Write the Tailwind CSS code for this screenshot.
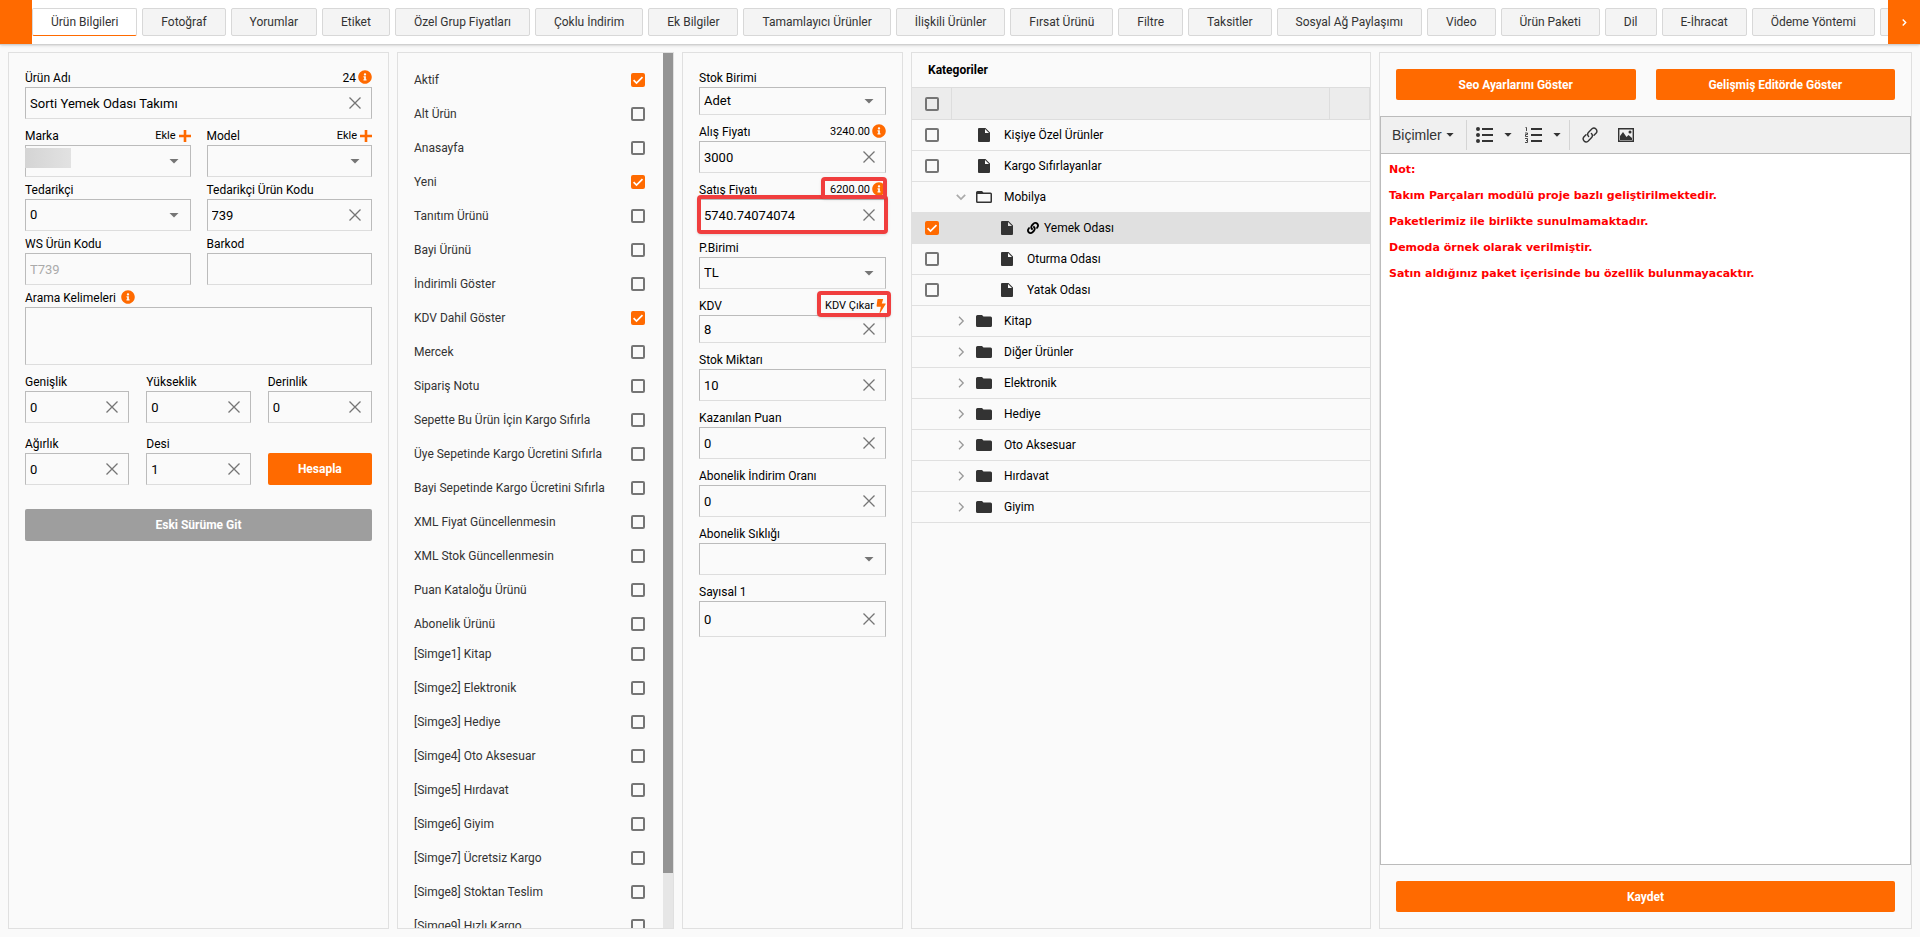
<!DOCTYPE html>
<html lang="tr">
<head>
<meta charset="utf-8">
<title>Ürün Bilgileri</title>
<script src="https://cdn.jsdelivr.net/npm/@tailwindcss/browser@4"></script>
</head>
<body class="flex h-screen flex-col overflow-hidden bg-[#fafafa] font-[Roboto,sans-serif] text-xs text-black">

<svg class="hidden" aria-hidden="true">
  <symbol id="i-x" viewBox="0 0 12 12"><path d="M.5.5l11 11M11.5.5l-11 11" fill="none" stroke="#757575" stroke-width="1.3"/></symbol>
  <symbol id="i-caret" viewBox="0 0 10 5"><path d="M.5 0h9L5 4.6z" fill="currentColor"/></symbol>
  <symbol id="i-plus" viewBox="0 0 12 12"><path d="M6 0v12M0 6h12" fill="none" stroke="#ff6a00" stroke-width="2.6"/></symbol>
  <symbol id="i-info" viewBox="0 0 512 512"><path fill="#ff6a00" d="M256 8C119 8 8 119.100 8 256c0 137 111 248 248 248s248-111 248-248C504 119.100 393 8 256 8zm0 110c23.200 0 42 18.800 42 42s-18.800 42-42 42-42-18.800-42-42 18.800-42 42-42zm56 254c0 6.600-5.400 12-12 12h-88c-6.600 0-12-5.400-12-12v-24c0-6.600 5.400-12 12-12h12v-64h-12c-6.600 0-12-5.400-12-12v-24c0-6.600 5.400-12 12-12h64c6.600 0 12 5.400 12 12v100h12c6.600 0 12 5.400 12 12v24z"/></symbol>
  <symbol id="i-bolt" viewBox="0 0 10 14"><path fill="#ff6a00" d="M2 0h5.200L5.800 4.400H9.300c.4 0 .6.400.4.700L4.300 13.700c-.3.500-.8.200-.7-.2L4.900 7.700H1.200c-.4 0-.6-.3-.6-.6L1.400.6C1.500.2 1.700 0 2 0z"/></symbol>
  <symbol id="i-check" viewBox="0 0 14 14"><path d="M2.600 7.200l2.900 2.900 6-6" fill="none" stroke="currentColor" stroke-width="1.700"/></symbol>
  <symbol id="i-file" viewBox="0 0 12 14"><path fill="#333" fill-rule="evenodd" d="M1 0h6.500L12 4.500V13a1 1 0 0 1-1 1H1a1 1 0 0 1-1-1V1a1 1 0 0 1 1-1zM7 1v4h4z"/></symbol>
  <symbol id="i-folder" viewBox="0 0 16 12"><path fill="#333" d="M1.500 0H6l1.500 1.500h7A1.500 1.500 0 0 1 16 3v7.500a1.500 1.500 0 0 1-1.500 1.500h-13A1.500 1.500 0 0 1 0 10.500v-9A1.500 1.500 0 0 1 1.500 0z"/></symbol>
  <symbol id="i-open" viewBox="0 0 16 12"><path fill="#333" fill-rule="evenodd" d="M1.500 0H6l1.500 1.500h7A1.500 1.500 0 0 1 16 3v7.500a1.500 1.500 0 0 1-1.500 1.500h-13A1.500 1.500 0 0 1 0 10.500v-9A1.500 1.500 0 0 1 1.500 0zM1.500 3v7.500h13V3z"/></symbol>
  <symbol id="i-down" viewBox="0 0 10 10"><path d="M.8 2.800L5 7l4.200-4.200" fill="none" stroke="#aaa" stroke-width="1.700"/></symbol>
  <symbol id="i-right" viewBox="0 0 10 10"><path d="M3 .8L7.200 5 3 9.200" fill="none" stroke="#999" stroke-width="1.300"/></symbol>
  <symbol id="i-link" viewBox="0 0 512 512"><path fill="currentColor" d="M326.612 185.391c59.747 59.809 58.927 155.698.360 214.590-.110.120-.240.250-.360.370l-67.200 67.200c-59.270 59.270-155.699 59.262-214.960 0-59.270-59.260-59.270-155.700 0-214.960l37.106-37.106c9.840-9.840 26.786-3.300 27.294 10.606.648 17.722 3.826 35.527 9.690 52.721 1.986 5.822.567 12.262-3.783 16.612l-13.087 13.087c-28.026 28.026-28.905 73.660-1.155 101.960 28.024 28.579 74.086 28.749 102.325.510l67.200-67.190c28.191-28.191 28.073-73.757 0-101.830-3.701-3.694-7.429-6.564-10.341-8.569a16.037 16.037 0 0 1-6.947-12.606c-.396-10.567 3.348-21.456 11.698-29.806l21.054-21.055c5.521-5.521 14.182-6.199 20.584-1.731a152.482 152.482 0 0 1 20.522 17.197zM467.547 44.449c-59.261-59.262-155.690-59.270-214.960 0l-67.200 67.200c-.120.120-.250.250-.360.370-58.566 58.892-59.387 154.781.360 214.590a152.454 152.454 0 0 0 20.521 17.196c6.402 4.468 15.064 3.789 20.584-1.731l21.054-21.055c8.350-8.350 12.094-19.239 11.698-29.806a16.037 16.037 0 0 0-6.947-12.606c-2.912-2.005-6.640-4.875-10.341-8.569-28.073-28.073-28.191-73.639 0-101.830l67.200-67.190c28.239-28.239 74.300-28.069 102.325.510 27.750 28.300 26.872 73.934-1.155 101.960l-13.087 13.087c-4.350 4.350-5.769 10.790-3.783 16.612 5.864 17.194 9.042 34.999 9.690 52.721.509 13.906 17.454 20.446 27.294 10.606l37.106-37.106c59.271-59.259 59.271-155.699.001-214.959z"/></symbol>
</svg>

<header class="flex h-[45px] shrink-0 border-b border-[#d0d0d0] bg-white shadow-sm">
  <div class="w-8 shrink-0 bg-[#ff6a00]"></div>
  <nav id="tabs" class="flex min-w-0 flex-1 items-center gap-[5px] overflow-hidden text-[#333]"></nav>
  <button aria-label="İleri" class="flex w-8 shrink-0 items-center justify-center bg-[#ff6a00]">
    <svg class="h-[7px] w-[5px]" viewBox="0 0 5 7"><path d="M.7.5l3 3-3 3" fill="none" stroke="#fff" stroke-width="1.400"/></svg>
  </button>
</header>

<main class="grid min-h-0 flex-1 grid-cols-[381fr_277fr_221fr_460fr_533fr] gap-2 px-2 pt-[7px] pb-2">

  <section class="min-w-0 border border-[#e0e0e0] p-4">
    <div id="f-name"></div>
    <div class="mt-2 grid grid-cols-2 gap-4"><div id="f-brand"></div><div id="f-model"></div></div>
    <div class="mt-1 grid grid-cols-2 gap-4"><div id="f-supplier"></div><div id="f-suppliercode"></div></div>
    <div class="mt-1 grid grid-cols-2 gap-4"><div id="f-ws"></div><div id="f-barcode"></div></div>
    <div class="mt-1">
      <div class="flex h-[18px] items-center gap-[5px]"><label for="keywords">Arama Kelimeleri</label><svg class="mb-0.5 size-3.5"><use href="#i-info"/></svg></div>
      <textarea id="keywords" class="block h-[58px] w-full resize-none border border-[#bbb] border-b-[#ddd] px-1"></textarea>
    </div>
    <div class="mt-2 grid grid-cols-3 gap-[17px]"><div id="f-width"></div><div id="f-height"></div><div id="f-depth"></div></div>
    <div class="mt-3 grid grid-cols-3 items-end gap-[17px]"><div id="f-weight"></div><div id="f-desi"></div>
      <button class="h-8 rounded-xs bg-[#ff6a00] font-bold text-white">Hesapla</button></div>
    <button class="mt-6 h-8 w-full rounded-xs bg-[#9e9e9e] font-bold text-white">Eski Sürüme Git</button>
  </section>

  <section class="flex min-h-0 min-w-0 border border-[#e0e0e0]">
    <div class="min-w-0 flex-1 overflow-hidden pt-2.5 pr-[18px] pl-4 text-[#333]">
      <ul id="flags"></ul>
      <ul id="symbols" class="-mt-1"></ul>
    </div>
    <div class="w-2.5 shrink-0 bg-[#e6e6e6]"><div class="h-[93.700%] bg-[#949494]"></div></div>
  </section>

  <section id="prices" class="flex min-w-0 flex-col gap-2 border border-[#e0e0e0] p-4"></section>

  <section class="min-w-0 overflow-hidden border border-[#e0e0e0]">
    <h2 class="h-[34px] pl-4 leading-[34px] font-bold">Kategoriler</h2>
    <table class="w-full table-fixed border-separate border-spacing-0">
      <thead>
        <tr class="h-[33px] bg-[#ececec]">
          <th class="w-10 border-y border-r border-[#ddd] p-0"><label class="mx-auto grid size-3.5"><input type="checkbox" aria-label="Tümünü seç" class="size-3.5 appearance-none rounded-xs border-2 border-[#757575]"></label></th>
          <th class="border-y border-r border-[#ddd] p-0"></th>
          <th class="w-10 border-y border-r border-[#ddd] p-0"></th>
        </tr>
      </thead>
      <tbody id="cats"></tbody>
    </table>
  </section>

  <section class="flex min-h-0 min-w-0 flex-col border border-[#e0e0e0]">
    <div class="grid grid-cols-2 gap-5 p-4">
      <button class="h-[31px] rounded-xs bg-[#ff6a00] font-bold text-white">Seo Ayarlarını Göster</button>
      <button class="h-[31px] rounded-xs bg-[#ff6a00] font-bold text-white">Gelişmiş Editörde Göster</button>
    </div>
    <div class="flex min-h-0 flex-1 flex-col border border-[#bbb] bg-white">
      <div class="flex h-[37px] shrink-0 items-center border-b border-[#bbb] bg-[#f0f0f0] pl-[11px] text-[#333]">
        <button class="flex items-center gap-1 font-['Liberation_Sans',sans-serif] text-sm">Biçimler <svg class="h-1 w-2"><use href="#i-caret"/></svg></button>
        <span class="mr-[9px] ml-3 h-[30px] w-px bg-[#d4d4d4]"></span>
        <button aria-label="Madde listesi" class="flex items-center gap-[11px]">
          <svg class="h-4 w-[17px]" viewBox="0 0 17 16"><g fill="#333"><circle cx="2" cy="2" r="2"/><circle cx="2" cy="8" r="2"/><circle cx="2" cy="14" r="2"/><path d="M6 1h11v2H6zM6 7h11v2H6zM6 13h11v2H6z"/></g></svg>
          <svg class="h-1 w-2"><use href="#i-caret"/></svg>
        </button>
        <button aria-label="Numaralı liste" class="ml-[13px] flex items-center gap-[11px]">
          <svg class="h-4 w-[17px]" viewBox="0 0 17 16"><g fill="#333"><path d="M6 1h11v2H6zM6 7h11v2H6zM6 13h11v2H6z"/></g><path d="M.5 .5h1V4M0 6h2.500v1.500H.5V9.500H3M0 11.500h2.500V13.500H1M2.500 13.500V15.500H0" fill="none" stroke="#333" stroke-width=".9"/></svg>
          <svg class="h-1 w-2"><use href="#i-caret"/></svg>
        </button>
        <span class="mr-3 ml-2 h-[30px] w-px bg-[#d4d4d4]"></span>
        <button aria-label="Bağlantı">
          <svg class="block size-4" viewBox="0 0 16 16"><g fill="none" stroke="#333" stroke-width="1.400" stroke-linecap="round"><path d="M6.600 9.400a3 3 0 0 1 0-4.200l3.400-3.400a3 3 0 0 1 4.200 4.200l-2.200 2.200"/><path d="M9.400 6.600a3 3 0 0 1 0 4.200L6 14.200A3 3 0 0 1 1.800 10L4 7.800"/></g></svg>
        </button>
        <button aria-label="Resim" class="ml-5">
          <svg class="block h-3.5 w-4" viewBox="0 0 16 14"><path d="M.7.700h14.600v12.600H.7z" fill="none" stroke="#333" stroke-width="1.400"/><path d="M2 12V8l3-4 3.500 5L10.500 7 14 10v2z" fill="#333"/><circle cx="12" cy="4" r="1.500" fill="#333"/></svg>
        </button>
      </div>
      <div class="min-h-0 flex-1 space-y-2 overflow-hidden px-2 pt-[7px] font-['Verdana','DejaVu_Sans',sans-serif] text-[11px] leading-[18px] font-bold text-[#ff0000]">
        <p>Not:</p>
        <p>Takım Parçaları modülü proje bazlı geliştirilmektedir.</p>
        <p>Paketlerimiz ile birlikte sunulmamaktadır.</p>
        <p>Demoda örnek olarak verilmiştir.</p>
        <p>Satın aldığınız paket içerisinde bu özellik bulunmayacaktır.</p>
      </div>
    </div>
    <div class="p-4"><button class="h-[31px] w-full rounded-xs bg-[#ff6a00] font-bold text-white">Kaydet</button></div>
  </section>
</main>

<script>
const $ = id => document.getElementById(id);

// Tabs
const tabs = ['Ürün Bilgileri','Fotoğraf','Yorumlar','Etiket','Özel Grup Fiyatları','Çoklu İndirim','Ek Bilgiler','Tamamlayıcı Ürünler','İlişkili Ürünler','Fırsat Ürünü','Filtre','Taksitler','Sosyal Ağ Paylaşımı','Video','Ürün Paketi','Dil','E-İhracat','Ödeme Yöntemi',''];
$('tabs').innerHTML = tabs.map((t, i) => `<button ${t ? '' : 'aria-label="Diğer"'} class="h-7 shrink-0 rounded-xs border px-[18px] whitespace-nowrap ${i ? 'border-[#d8d8d8] bg-[#f4f4f4]' : 'border-[#d8d8d8] border-b-[#ff6a00] bg-white'}">${t}</button>`).join('');

// Form fields
const extras = {
  info: t => `<span class="flex items-center gap-0.5">${t}<svg class="mb-0.5 size-3.5"><use href="#i-info"/></svg></span>`,
  add: t => `<button class="flex items-center gap-[3px] text-[11px]">${t}<svg class="size-3"><use href="#i-plus"/></svg></button>`,
  price: t => `<span class="flex items-center gap-0.5 text-[11px]">${t}<svg class="mb-0.5 size-3.5"><use href="#i-info"/></svg></span>`,
  bolt: t => `<button class="flex items-center gap-0.5 text-[11px]">${t}<svg class="h-3.5 w-2.5"><use href="#i-bolt"/></svg></button>`
};
const heights = { 28: 'h-7', 32: 'h-8', 36: 'h-9' };
function field(id, label, value, o = {}) {
  const box = `col-start-1 row-start-1 w-full min-w-0 border border-[#bbb] border-b-[#ddd] bg-transparent pl-1 text-[13px] ${heights[o.h || 32]}`;
  const control = o.kind === 'select'
    ? `<select id="${id}" class="${box} appearance-none"><option>${value}</option></select><svg class="pointer-events-none col-start-1 row-start-1 mr-3 h-[5px] w-2.5 justify-self-end text-[#757575]"><use href="#i-caret"/></svg>`
    : `<input id="${id}" type="text" value="${value}" ${o.disabled ? 'disabled' : ''} class="${box} ${o.disabled ? 'text-[#aaa]' : ''}">` +
      (o.kind === 'plain' ? '' : `<button aria-label="Temizle" class="col-start-1 row-start-1 mr-[11px] justify-self-end"><svg class="block size-3"><use href="#i-x"/></svg></button>`);
  return `<div class="relative flex h-[18px] items-center justify-between"><label for="${id}">${label}</label>${o.extra ? extras[o.extra[0]](o.extra[1]) : ''}${o.headMark || ''}</div>
    <div class="relative grid items-center">${control}${o.mask || ''}${o.boxMark || ''}</div>`;
}
const put = (id, ...a) => $('f-' + id).innerHTML = field(id, ...a);
put('name', 'Ürün Adı', 'Sorti Yemek Odası Takımı', { extra: ['info', '24'] });
put('brand', 'Marka', '', { kind: 'select', extra: ['add', 'Ekle'], mask: '<span class="absolute top-[3px] left-0 h-5 w-[46px] bg-linear-to-r from-[#d4d4d4] to-[#e2e2e2]"></span>' });
put('model', 'Model', '', { kind: 'select', extra: ['add', 'Ekle'] });
put('supplier', 'Tedarikçi', '0', { kind: 'select' });
put('suppliercode', 'Tedarikçi Ürün Kodu', '739');
put('ws', 'WS Ürün Kodu', 'T739', { kind: 'plain', disabled: true });
put('barcode', 'Barkod', '', { kind: 'plain' });
put('width', 'Genişlik', '0');
put('height', 'Yükseklik', '0');
put('depth', 'Derinlik', '0');
put('weight', 'Ağırlık', '0');
put('desi', 'Desi', '1');

const prices = [
  ['Stok Birimi', 'Adet', { kind: 'select', h: 28 }],
  ['Alış Fiyatı', '3000', { extra: ['price', '3240.00'] }],
  ['Satış Fiyatı', '5740.74074074', { extra: ['price', '6200.00'],
    headMark: '<span class="pointer-events-none absolute -top-1 -right-px z-20 h-[22px] w-[66px] rounded border-4 border-[#f03e3e] shadow"></span>',
    boxMark: '<span class="pointer-events-none absolute -top-1 -right-0.5 -bottom-[3px] -left-0.5 z-10 rounded border-4 border-[#f03e3e] shadow"></span>' }],
  ['P.Birimi', 'TL', { kind: 'select' }],
  ['KDV', '8', { h: 28, extra: ['bolt', 'KDV Çıkar'],
    headMark: '<span class="pointer-events-none absolute -top-1.5 -right-[5px] z-10 h-[26px] w-[74px] rounded border-4 border-[#f03e3e] shadow"></span>' }],
  ['Stok Miktarı', '10'],
  ['Kazanılan Puan', '0'],
  ['Abonelik İndirim Oranı', '0'],
  ['Abonelik Sıklığı', '', { kind: 'select' }],
  ['Sayısal 1', '0', { h: 36 }]
];
$('prices').innerHTML = prices.map((p, i) => `<div>${field('price' + i, ...p)}</div>`).join('');

// Check lists
const check = (id, label, on) => `<span class="grid size-3.5 shrink-0"><input id="${id}" type="checkbox" aria-label="${label}" ${on ? 'checked' : ''} class="peer col-start-1 row-start-1 size-3.5 appearance-none rounded-xs border-2 border-[#757575] checked:border-[#ff6a00] checked:bg-[#ff6a00]"><svg class="pointer-events-none invisible col-start-1 row-start-1 size-3.5 text-white peer-checked:visible"><use href="#i-check"/></svg></span>`;
const item = (id, label, on) => `<li class="flex h-[34px] items-center justify-between"><label for="${id}">${label}</label>${check(id, label, on)}</li>`;
const flags = ['Aktif','Alt Ürün','Anasayfa','Yeni','Tanıtım Ürünü','Bayi Ürünü','İndirimli Göster','KDV Dahil Göster','Mercek','Sipariş Notu','Sepette Bu Ürün İçin Kargo Sıfırla','Üye Sepetinde Kargo Ücretini Sıfırla','Bayi Sepetinde Kargo Ücretini Sıfırla','XML Fiyat Güncellenmesin','XML Stok Güncellenmesin','Puan Kataloğu Ürünü','Abonelik Ürünü'];
const on = ['Aktif', 'Yeni', 'KDV Dahil Göster'];
$('flags').innerHTML = flags.map((f, i) => item('flag' + i, f, on.includes(f))).join('');
const symbols = ['Kitap','Elektronik','Hediye','Oto Aksesuar','Hırdavat','Giyim','Ücretsiz Kargo','Stoktan Teslim','Hızlı Kargo'];
$('symbols').innerHTML = symbols.map((s, i) => item('symbol' + i, `[Simge${i + 1}] ${s}`, false)).join('');

// Category tree: name, type, checked
const cats = [['Kişiye Özel Ürünler','file'],['Kargo Sıfırlayanlar','file'],['Mobilya','open'],['Yemek Odası','sub',true],['Oturma Odası','sub'],['Yatak Odası','sub'],['Kitap','folder'],['Diğer Ürünler','folder'],['Elektronik','folder'],['Hediye','folder'],['Oto Aksesuar','folder'],['Hırdavat','folder'],['Giyim','folder']];
$('cats').innerHTML = cats.map(([name, type, sel], i) => {
  const leaf = type === 'file' || type === 'sub';
  const arrow = leaf ? '' : `<svg class="size-2.5"><use href="${type === 'open' ? '#i-down' : '#i-right'}"/></svg>`;
  const icon = leaf ? '<svg class="h-3.5 w-3"><use href="#i-file"/></svg>' : `<svg class="h-3 w-4"><use href="${type === 'open' ? '#i-open' : '#i-folder'}"/></svg>`;
  const title = `${sel ? '<svg class="size-3"><use href="#i-link"/></svg>' : ''}${name}`;
  return `<tr class="h-[31px] ${sel ? 'bg-[#e0e0e0]' : ''}">
    <td class="border-b border-[#e0e0e0] p-0 pl-[13px]">${leaf ? check('cat' + i, name, sel) : ''}</td>
    <td colspan="2" class="border-b border-[#e0e0e0] p-0"><div class="flex items-center ${type === 'sub' ? 'pl-[27px]' : 'pl-1'}">
      <span class="w-5">${arrow}</span><span class="flex w-4 justify-center">${icon}</span>
      ${leaf ? `<label for="cat${i}" class="ml-3 flex items-center gap-[5px]">${title}</label>` : `<span class="ml-3">${title}</span>`}</div></td></tr>`;
}).join('');
</script>
</body>
</html>
